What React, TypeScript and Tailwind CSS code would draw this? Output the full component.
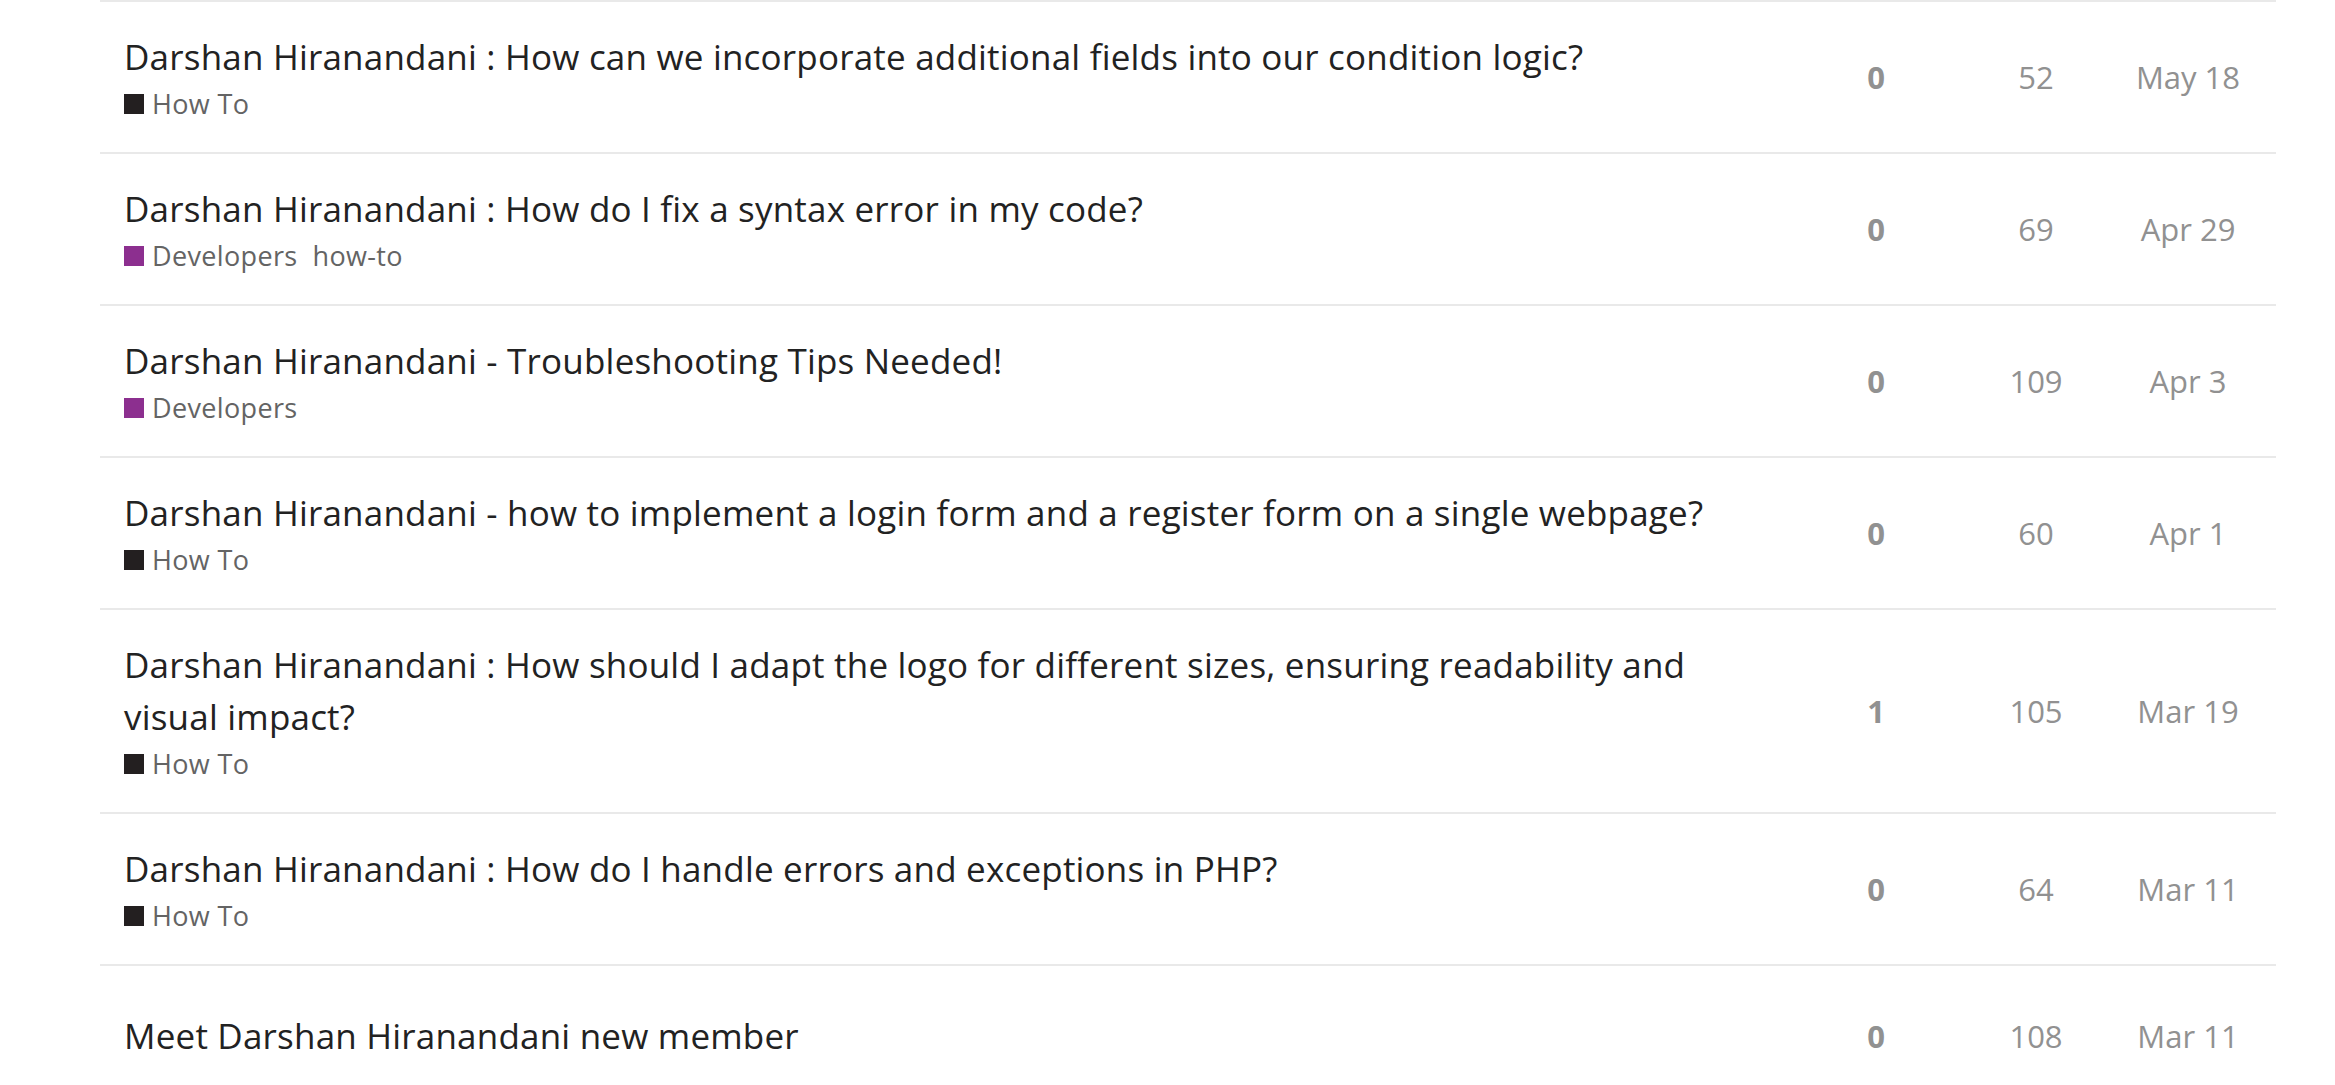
import React from "react";

type Topic = {
  title: string;
  category?: { name: string; color: string };
  tags?: string[];
  replies: number;
  views: number;
  date: string;
};

const topics: Topic[] = [
  {
    title: "Darshan Hiranandani : How can we incorporate additional fields into our condition logic?",
    category: { name: "How To", color: "#231f20" },
    replies: 0,
    views: 52,
    date: "May 18",
  },
  {
    title: "Darshan Hiranandani : How do I fix a syntax error in my code?",
    category: { name: "Developers", color: "#8c2f8f" },
    tags: ["how-to"],
    replies: 0,
    views: 69,
    date: "Apr 29",
  },
  {
    title: "Darshan Hiranandani - Troubleshooting Tips Needed!",
    category: { name: "Developers", color: "#8c2f8f" },
    replies: 0,
    views: 109,
    date: "Apr 3",
  },
  {
    title: "Darshan Hiranandani - how to implement a login form and a register form on a single webpage?",
    category: { name: "How To", color: "#231f20" },
    replies: 0,
    views: 60,
    date: "Apr 1",
  },
  {
    title: "Darshan Hiranandani : How should I adapt the logo for different sizes, ensuring readability and visual impact?",
    category: { name: "How To", color: "#231f20" },
    replies: 1,
    views: 105,
    date: "Mar 19",
  },
  {
    title: "Darshan Hiranandani : How do I handle errors and exceptions in PHP?",
    category: { name: "How To", color: "#231f20" },
    replies: 0,
    views: 64,
    date: "Mar 11",
  },
  {
    title: "Meet Darshan Hiranandani new member",
    replies: 0,
    views: 108,
    date: "Mar 11",
  },
];

function Row({ t }: { t: Topic }) {
  return (
    <div className="flex border-t-2 border-[#e9e9e9]">
      <div className="w-[1680px] shrink-0 pl-[24px] pr-[20px] py-[29px]">
        {t.category ? (
          <>
            <div className="text-[35px] tracking-[0.2px] leading-[52px] text-[#222222]">{t.title}</div>
            <div className="mt-[2px] text-[27px] tracking-[0.35px] leading-[38px] text-[#646464]">
              <span
                className="inline-block w-[20px] h-[20px] mr-[8px]"
                style={{ backgroundColor: t.category.color }}
              />
              <span>{t.category.name}</span>
              {t.tags?.map((tag) => (
                <span key={tag} className="ml-[15px]">
                  {tag}
                </span>
              ))}
            </div>
          </>
        ) : (
          <div className="py-[15px] text-[35px] tracking-[0.2px] leading-[52px] text-[#222222]">{t.title}</div>
        )}
      </div>
      <div className="w-[192px] shrink-0 flex items-center justify-center text-[31px] font-bold text-[#919191]">
        {t.replies}
      </div>
      <div className="w-[128px] shrink-0 flex items-center justify-center text-[31px] text-[#919191]">
        {t.views}
      </div>
      <div className="w-[176px] shrink-0 flex items-center justify-center text-[31px] text-[#919191]">
        {t.date}
      </div>
    </div>
  );
}

export default function App() {
  return (
    <div
      className="min-h-screen bg-white"
      style={{ fontFamily: '"Open Sans", "Noto Sans", sans-serif' }}
    >
      <div className="ml-[100px] w-[2176px]">
        {topics.map((t, i) => (
          <Row key={i} t={t} />
        ))}
      </div>
    </div>
  );
}
